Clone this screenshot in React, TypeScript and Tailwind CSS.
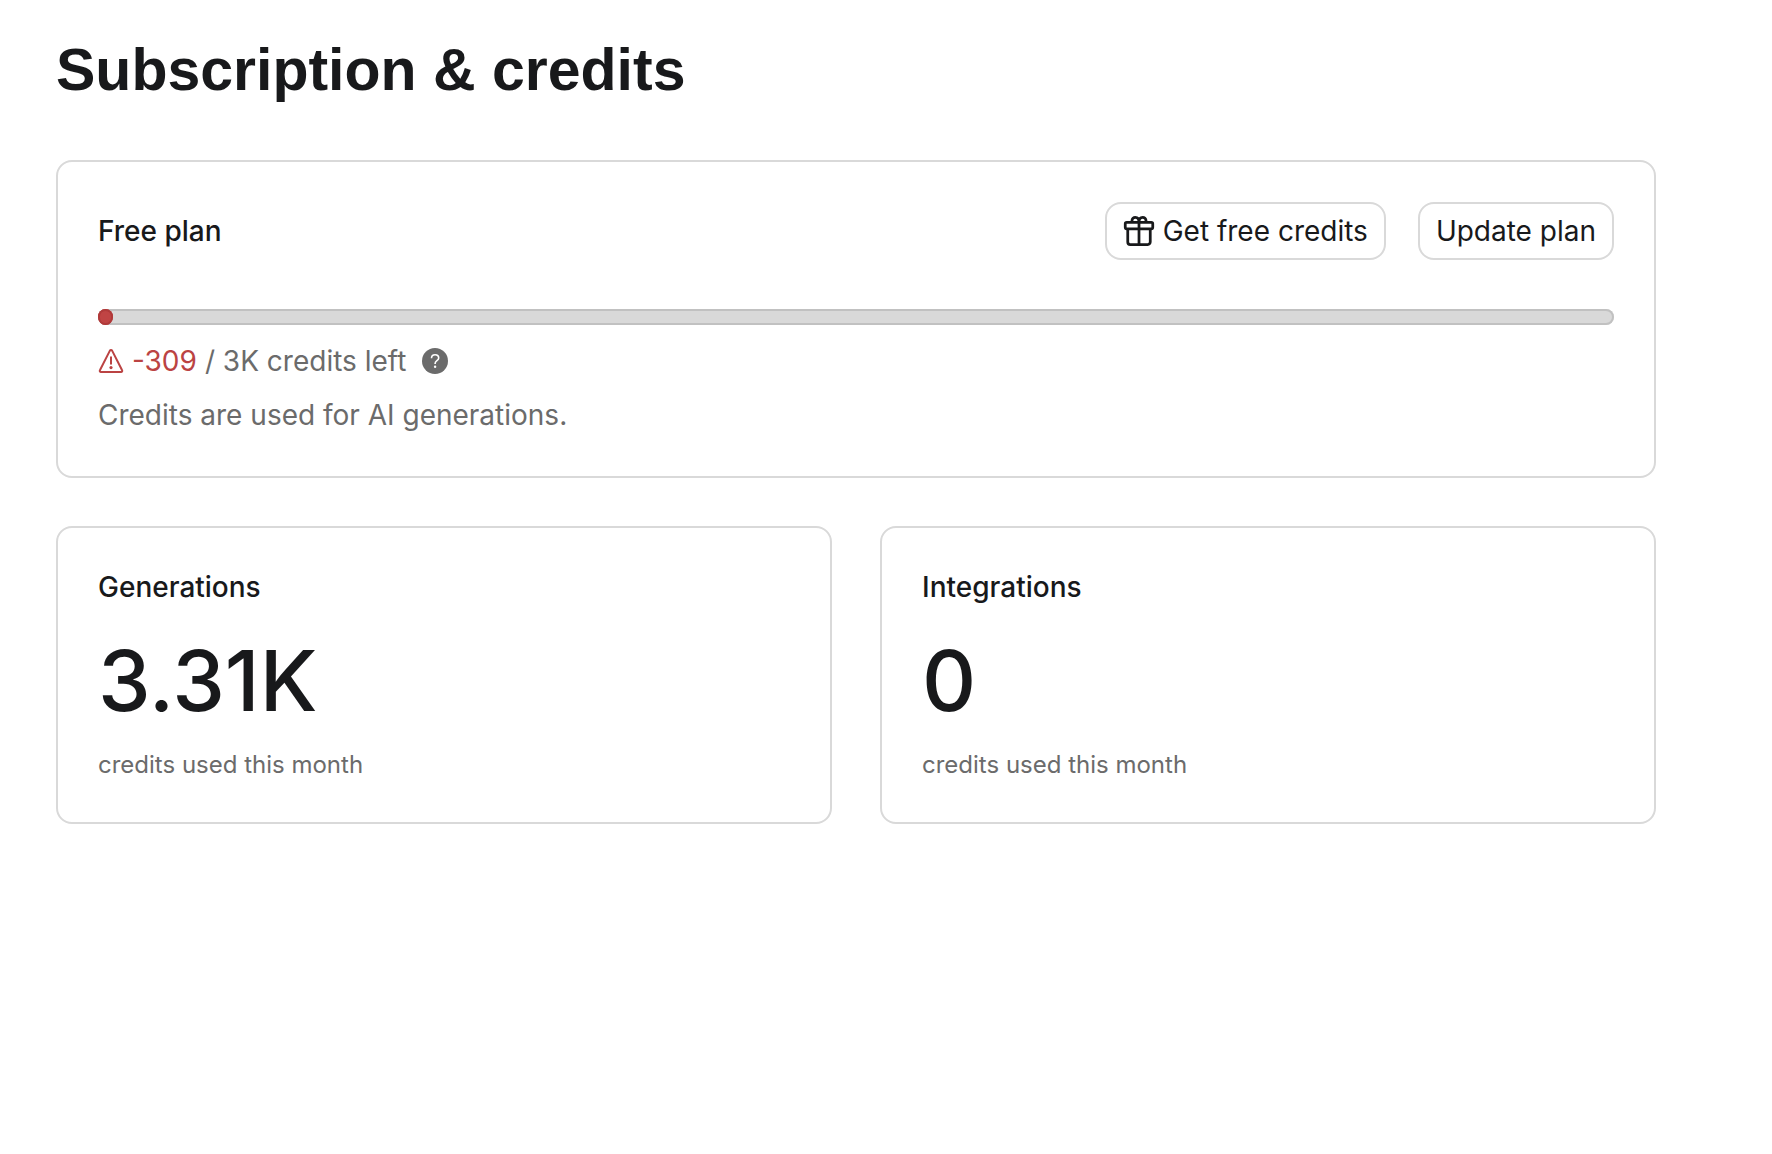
type UsageCardProps = {
  title: string;
  value: string;
};

const usage: UsageCardProps[] = [
  { title: "Generations", value: "3.31K" },
  { title: "Integrations", value: "0" },
];

const GiftIcon = () => (
  <svg
    className="size-8 shrink-0"
    viewBox="0 0 32 32"
    fill="none"
    stroke="currentColor"
    strokeWidth="2.75"
    strokeLinejoin="round"
    aria-hidden="true"
  >
    <rect x="2.25" y="7.25" width="27.5" height="6.5" rx="1.5" />
    <path d="M4.75 14v13a2.5 2.5 0 0 0 2.5 2.5h17.5a2.5 2.5 0 0 0 2.5-2.5V14" />
    <path d="M16 7v22.5" />
    <path d="M16 7c0-3-1.6-4.75-3.7-4.75A3.3 3.3 0 0 0 9 5.5V7M16 7c0-3 1.6-4.75 3.7-4.75A3.3 3.3 0 0 1 23 5.5V7" />
  </svg>
);

const WarningIcon = () => (
  <svg
    className="size-[26px] shrink-0"
    viewBox="0 0 26 26"
    fill="none"
    stroke="currentColor"
    strokeWidth="2"
    strokeLinejoin="round"
    aria-hidden="true"
  >
    <path d="M11.9 2.6a1.3 1.3 0 0 1 2.2 0l10 19.6a1.2 1.2 0 0 1-1.1 1.8H3a1.2 1.2 0 0 1-1.1-1.8z" />
    <path d="M13 8.5v8" />
    <circle cx="13" cy="19.6" r="1.6" fill="currentColor" stroke="none" />
  </svg>
);

const HelpIcon = () => (
  <svg className="size-[26px]" viewBox="0 0 26 26" fill="none" aria-hidden="true">
    <circle cx="13" cy="13" r="13" fill="currentColor" />
    <path
      d="M9.5 10.2c0-2 1.5-3.5 3.6-3.5s3.6 1.4 3.6 3.3c0 2.6-3.6 2.8-3.6 5.4v.6"
      stroke="white"
      strokeWidth="1.6"
    />
    <circle cx="13.1" cy="18.8" r="1.2" fill="white" />
  </svg>
);

const UsageCard = ({ title, value }: UsageCardProps) => {
  return (
    <section className="flex flex-col rounded-2xl border-2 border-[#d9d9d9] p-10">
      <h2 className="text-[28px] leading-[38px] font-medium">{title}</h2>
      <p className="mt-[27px] text-[84px] leading-[96px] font-medium">{value}</p>
      <p className="mt-[19px] text-[24px] leading-[34px] text-[#6b6b6b]">
        credits used this month
      </p>
    </section>
  );
};

const PlanCard = () => {
  return (
    <section className="rounded-2xl border-2 border-[#d9d9d9] p-10">
      <div className="flex flex-wrap items-center justify-between gap-4">
        <h2 className="text-[28px] leading-[42px] font-medium">Free plan</h2>
        <div className="flex flex-wrap gap-8">
          <button
            type="button"
            className="flex h-[58px] items-center gap-2 rounded-2xl border-2 border-[#d9d9d9] px-4 text-[28px] leading-[42px]"
          >
            <GiftIcon />
            Get free credits
          </button>
          <button
            type="button"
            className="flex h-[58px] items-center rounded-2xl border-2 border-[#d9d9d9] px-4 text-[28px] leading-[42px]"
          >
            Update plan
          </button>
        </div>
      </div>

      <div
        role="progressbar"
        aria-label="Credits left"
        aria-valuemin={0}
        aria-valuemax={3000}
        aria-valuenow={0}
        className="mt-[49px] flex h-4 rounded-full bg-[#d9d9d9] inset-ring-2 inset-ring-[#c1c1c1]"
      >
        <div className="h-4 w-[15px] rounded-full bg-[#c04444] inset-ring-2 inset-ring-[#b03a3a]" />
      </div>

      <div className="mt-[15px] flex items-center text-[28px] leading-[42px] text-[#6b6b6b]">
        <span className="flex items-center gap-2 text-[#bb4343]">
          <WarningIcon />
          -309
        </span>
        <span className="ml-2">/ 3K credits left</span>
        <button type="button" aria-label="About credits" className="ml-4">
          <HelpIcon />
        </button>
      </div>
      <p className="mt-3 text-[28px] leading-[42px] text-[#6b6b6b]">
        Credits are used for AI generations.
      </p>
    </section>
  );
};

export default function App() {
  return (
    <main className="min-h-screen bg-white px-14 pt-8 pb-14 font-['Inter',sans-serif] text-[#18191b]">
      <div className="max-w-[1600px]">
        <h1 className="mb-[52px] font-['Liberation_Sans',sans-serif] text-[59px] leading-[76px] font-bold">
          Subscription &amp; credits
        </h1>
        <PlanCard />
        <div className="mt-12 grid grid-cols-1 gap-12 md:grid-cols-2">
          {usage.map((item) => (
            <UsageCard key={item.title} title={item.title} value={item.value} />
          ))}
        </div>
      </div>
    </main>
  );
}
